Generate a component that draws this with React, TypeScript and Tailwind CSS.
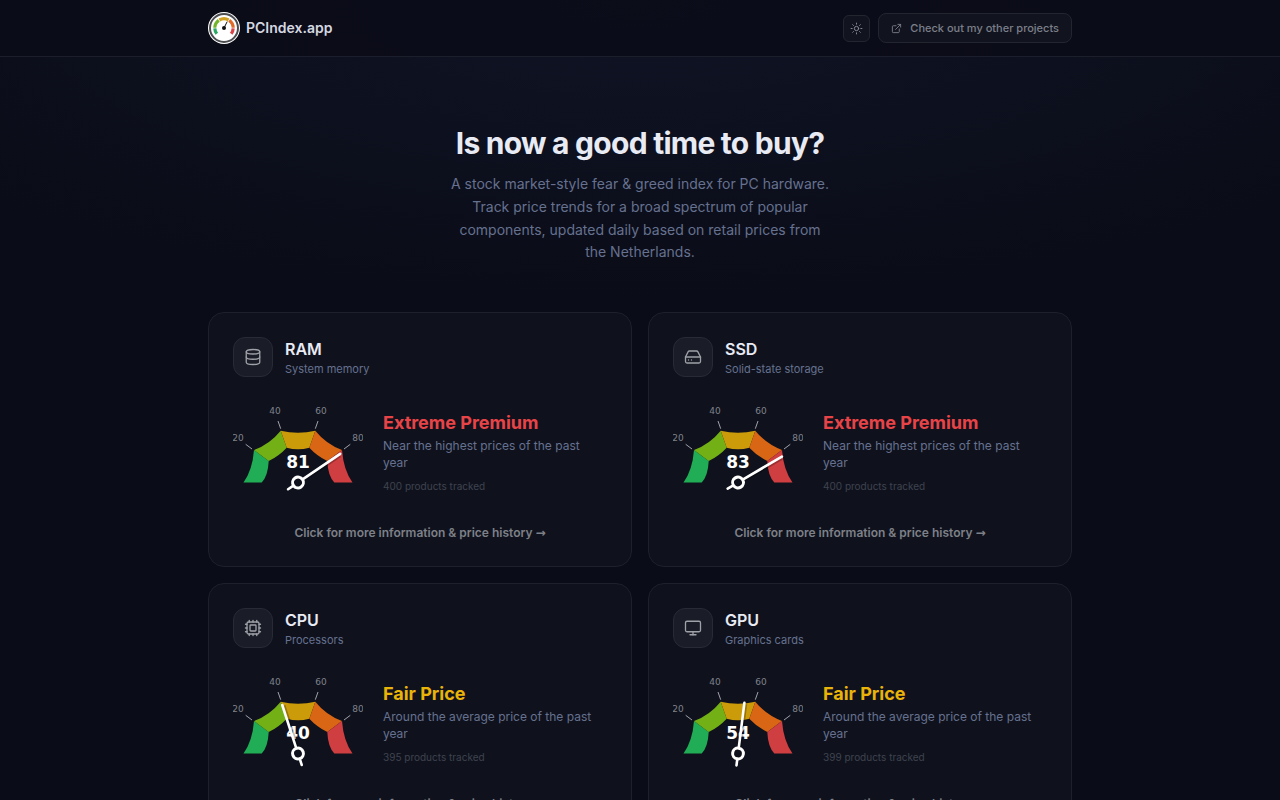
import { Cpu, Database, ExternalLink, HardDrive, Monitor, Sun } from 'lucide-react';
import type { LucideIcon } from 'lucide-react';

type Category = {
    name: string;
    description: string;
    icon: LucideIcon;
    score: number;
    label: string;
    labelColor: string;
    summary: string;
    tracked: number;
};

const CATEGORIES: Category[] = [
    {
        name: 'RAM',
        description: 'System memory',
        icon: Database,
        score: 81,
        label: 'Extreme Premium',
        labelColor: 'text-[#e84448]',
        summary: 'Near the highest prices of the past year',
        tracked: 400,
    },
    {
        name: 'SSD',
        description: 'Solid-state storage',
        icon: HardDrive,
        score: 83,
        label: 'Extreme Premium',
        labelColor: 'text-[#e84448]',
        summary: 'Near the highest prices of the past year',
        tracked: 400,
    },
    {
        name: 'CPU',
        description: 'Processors',
        icon: Cpu,
        score: 40,
        label: 'Fair Price',
        labelColor: 'text-[#eab308]',
        summary: 'Around the average price of the past year',
        tracked: 395,
    },
    {
        name: 'GPU',
        description: 'Graphics cards',
        icon: Monitor,
        score: 54,
        label: 'Fair Price',
        labelColor: 'text-[#eab308]',
        summary: 'Around the average price of the past year',
        tracked: 399,
    },
];

const SEGMENTS = [
    { color: '#20ad55', d: 'M10.5 82.5Q19.5 70 21 50L35.7 61Q35 76 28.7 82.5Z' },
    { color: '#73b016', d: 'M21 50Q37 44 47.7 30.7L53.7 47.7Q46 56 35.7 61Z' },
    { color: '#cb9b0a', d: 'M47.7 30.7Q65 35 82.3 30.7L76.3 47.7Q65 51 53.7 47.7Z' },
    { color: '#d96614', d: 'M82.3 30.7Q93 44 109 50L94.3 61Q84 56 76.3 47.7Z' },
    { color: '#cf3e40', d: 'M109 50Q110.5 70 119.5 82.5L101.3 82.5Q95 76 94.3 61Z' },
];

function Gauge({ score }: { score: number }) {
    // 0 points left, 100 points right
    const rotation = score * 1.8 - 90;

    return (
        <svg
            viewBox="0 -3 130 108"
            className="h-[108px] w-[130px] shrink-0 overflow-hidden font-['DejaVu_Sans',sans-serif]"
            role="img"
            aria-label={`Index score ${score}`}
        >
            {SEGMENTS.map((segment) => (
                <path key={segment.color} d={segment.d} fill={segment.color} />
            ))}
            <path d="M12.7 44.3L19 49M45 21L47.7 28.7M85 21L82.3 28.7M117.3 44.3L111 49" stroke="#a1a1aa" strokeWidth="1" />
            <g fill="#7f828c" fontSize="9" textAnchor="middle">
                <text x="5" y="41">20</text>
                <text x="42" y="14">40</text>
                <text x="88" y="14">60</text>
                <text x="125" y="41">80</text>
            </g>
            <text x="65" y="68" textAnchor="middle" fontSize="17" fontWeight="700" fill="#fff">
                {score}
            </text>
            <g transform={`translate(65 82.5) rotate(${rotation})`}>
                <path d="M1.5 -6V-50" stroke="#000" strokeOpacity="0.25" strokeWidth="3" />
                <path d="M0 -6V-51M0 6V12" stroke="#fff" strokeWidth="2.6" strokeLinecap="round" />
                <circle r="5.4" fill="#0f121d" stroke="#fff" strokeWidth="3" />
            </g>
        </svg>
    );
}

function Logo() {
    return (
        <svg viewBox="0 0 32 32" className="size-8" aria-hidden="true">
            <circle cx="16" cy="16" r="16" fill="#fff" />
            <circle cx="16" cy="16" r="14" fill="none" stroke="#4b4d50" strokeWidth="2" />
            <g fill="none" strokeWidth="3.2">
                <path d="M8.8 21.7A9.2 9.2 0 0 1 6.8 16.4" stroke="#2aa865" />
                <path d="M6.8 15.7A9.2 9.2 0 0 1 10.8 8.4" stroke="#72b52c" />
                <path d="M11.4 8A9.2 9.2 0 0 1 20.6 8" stroke="#cfa022" />
                <path d="M21.2 8.4A9.2 9.2 0 0 1 25.2 15.7" stroke="#dd6c2b" />
                <path d="M25.2 16.4A9.2 9.2 0 0 1 23.2 21.7" stroke="#d84348" />
            </g>
            <path d="M16 16L19 10" stroke="#111" strokeWidth="1" strokeLinecap="round" />
            <circle cx="16" cy="16" r="2" fill="#111" />
        </svg>
    );
}

function CategoryCard({ category }: { category: Category }) {
    const Icon = category.icon;

    return (
        <a href={`#${category.name.toLowerCase()}`} className="block rounded-2xl border border-[#1e212c] bg-[#0f121d] p-6">
            <div className="flex items-center gap-3">
                <div className="flex size-10 items-center justify-center rounded-xl border border-[#282a35] bg-[#1a1c27]">
                    <Icon className="size-[18px] text-[#a0a1a8]" strokeWidth={1.75} />
                </div>
                <div>
                    <h2 className="text-base leading-6 font-semibold text-[#e8eaf4]">{category.name}</h2>
                    <p className="text-[11px] leading-4 text-[#66718f]">{category.description}</p>
                </div>
            </div>

            <div className="mt-5 flex items-center gap-5">
                <Gauge score={category.score} />
                <div className="max-w-[216px] min-w-0">
                    <p className={`text-lg leading-7 font-bold ${category.labelColor}`}>{category.label}</p>
                    <p className="text-xs leading-[17px] text-[#66718f]">{category.summary}</p>
                    <p className="mt-[7px] text-[10px] leading-4 text-[#3f434f]">{category.tracked} products tracked</p>
                </div>
            </div>

            <p className="mt-[18px] text-center text-xs leading-[19px] font-semibold text-[#7e8088]">
                Click for more information &amp; price history <span className="font-['DejaVu_Sans',sans-serif] leading-none">→</span>
            </p>
        </a>
    );
}

export default function App() {
    return (
        <div className="min-h-screen bg-[#0a0c16] bg-[radial-gradient(ellipse_900px_300px_at_50%_0%,#101425,#0a0c17)] font-['Inter',sans-serif] text-[#e8eaf4]">
            <header className="border-b border-[#1c1f2b] bg-[#0a0c17]/85">
                <div className="mx-auto flex h-14 max-w-4xl items-center justify-between px-4">
                    <a href="#home" className="flex items-center gap-1.5 text-sm font-semibold text-[#d5d7e0]">
                        <Logo />
                        PCIndex.app
                    </a>
                    <div className="flex items-center gap-2">
                        <button
                            type="button"
                            aria-label="Toggle theme"
                            className="flex size-[27px] items-center justify-center rounded-md border border-[#23252f] bg-[#11141e] text-[#8a8c96]"
                        >
                            <Sun className="size-[13px]" strokeWidth={1.75} />
                        </button>
                        <a
                            href="#projects"
                            className="flex h-[30px] items-center gap-2 rounded-lg border border-[#23252f] bg-[#11141e] px-3 text-[11px] font-medium text-[#7c7f8a]"
                        >
                            <ExternalLink className="size-[11px]" strokeWidth={2} />
                            Check out my other projects
                        </a>
                    </div>
                </div>
            </header>

            <main className="mx-auto max-w-4xl px-4 pb-16">
                <section className="mx-auto max-w-96 pt-16 pb-12 text-center">
                    <h1 className="text-3xl leading-[45px] font-bold tracking-tight whitespace-nowrap">Is now a good time to buy?</h1>
                    <p className="mt-[7px] text-sm leading-relaxed text-[#66718f]">
                        A stock market-style fear &amp; greed index for PC hardware. Track price trends for a broad spectrum of popular
                        components, updated daily based on retail prices from the Netherlands.
                    </p>
                </section>

                <section className="grid grid-cols-1 gap-4 sm:grid-cols-2">
                    {CATEGORIES.map((category) => (
                        <CategoryCard key={category.name} category={category} />
                    ))}
                </section>
            </main>
        </div>
    );
}
